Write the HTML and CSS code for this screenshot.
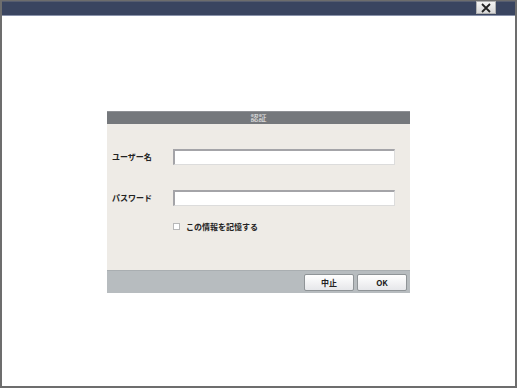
FILE: index.html
```html
<!DOCTYPE html>
<html lang="ja">
<head>
    <meta charset="UTF-8">
    <title>認証</title>
    <link rel="stylesheet" href="styles.css">
</head>
<body>

<div class="window">
    <div class="titlebar">
        <button class="close-btn">
            <svg width="10" height="10" viewBox="0 0 10 10"><path d="M1 1L9 9M9 1L1 9" stroke="#222" stroke-width="1.8"/></svg>
        </button>
    </div>
    <div class="content">
        <div class="dialog">
            <div class="dialog-header">認証</div>
            <div class="dialog-body">
                <div class="row">
                    <label class="label">ユーザー名</label>
                    <input class="field" type="text">
                </div>
                <div class="row">
                    <label class="label">パスワード</label>
                    <input class="field" type="password">
                </div>
                <div class="remember">
                    <span class="check"></span>
                    <span>この情報を記憶する</span>
                </div>
            </div>
            <div class="dialog-footer">
                <button class="btn">中止</button>
                <button class="btn">OK</button>
            </div>
        </div>
    </div>
</div>

</body>
</html>
```

FILE: styles.css
```css
body {
    margin: 0;
    padding: 0;
    font-family: "Noto Sans CJK JP", "Liberation Sans", sans-serif;
}
.window {
    width: 517px;
    height: 388px;
    box-sizing: border-box;
    border: 2px solid #6d6d6d;
    border-top-width: 1px;
    display: flex;
    flex-direction: column;
    background-color: #fff;
}
.titlebar {
    height: 13px;
    background-color: #3a4560;
    border-top: 1px solid #565d70;
    border-bottom: 1px solid #8a93ab;
    display: flex;
    justify-content: flex-end;
    padding-right: 19px;
}
.close-btn {
    width: 20px;
    height: 13px;
    margin-top: -1px;
    padding: 0;
    border: 1px solid #b0b0b0;
    background: linear-gradient(#f4f4f4, #d8d8d8);
    display: flex;
    align-items: center;
    justify-content: center;
}
.content {
    flex: 1;
    display: flex;
    padding: 95px 0 0 105px;
}
.dialog {
    width: 303px;
    height: 182px;
    display: flex;
    flex-direction: column;
}
.dialog-header {
    height: 12px;
    background-color: #75787c;
    border-top: 1px solid #8e9094;
    color: #e8e8e8;
    font-size: 8px;
    line-height: 11px;
    text-align: center;
}
.dialog-body {
    height: 148px;
    box-sizing: border-box;
    background-color: #eeebe6;
    padding-top: 25px;
}
.row {
    display: flex;
    align-items: center;
    height: 16px;
    margin-bottom: 25px;
}
.label {
    width: 66px;
    box-sizing: border-box;
    padding-left: 5px;
    font-size: 8px;
    font-weight: bold;
    color: #222;
}
.field {
    width: 222px;
    height: 16px;
    box-sizing: border-box;
    border: none;
    border-top: 2px solid #a4a4a8;
    border-left: 2px solid #a4a4a8;
    border-right: 1px solid #dcdcdc;
    border-bottom: 1px solid #dcdcdc;
    background-color: #fff;
    outline: none;
}
.remember {
    display: flex;
    align-items: center;
    margin-top: -10px;
    padding-left: 66px;
    font-size: 8px;
    font-weight: bold;
    color: #222;
}
.check {
    width: 5px;
    height: 5px;
    border: 1px solid #b8b8b8;
    background-color: #fff;
    margin-right: 6px;
}
.dialog-footer {
    height: 22px;
    background-color: #b7bcbf;
    border-top: 1px solid #a9aeb1;
    display: flex;
    justify-content: flex-end;
    align-items: center;
    gap: 3px;
    padding-right: 3px;
}
.btn {
    width: 50px;
    height: 17px;
    padding: 0;
    border: 1px solid #8f9497;
    border-radius: 2px;
    background: linear-gradient(#ffffff, #e6e7ea);
    font-family: "Noto Sans CJK JP", "Liberation Sans", sans-serif;
    font-size: 8px;
    font-weight: bold;
    color: #222;
}
```
